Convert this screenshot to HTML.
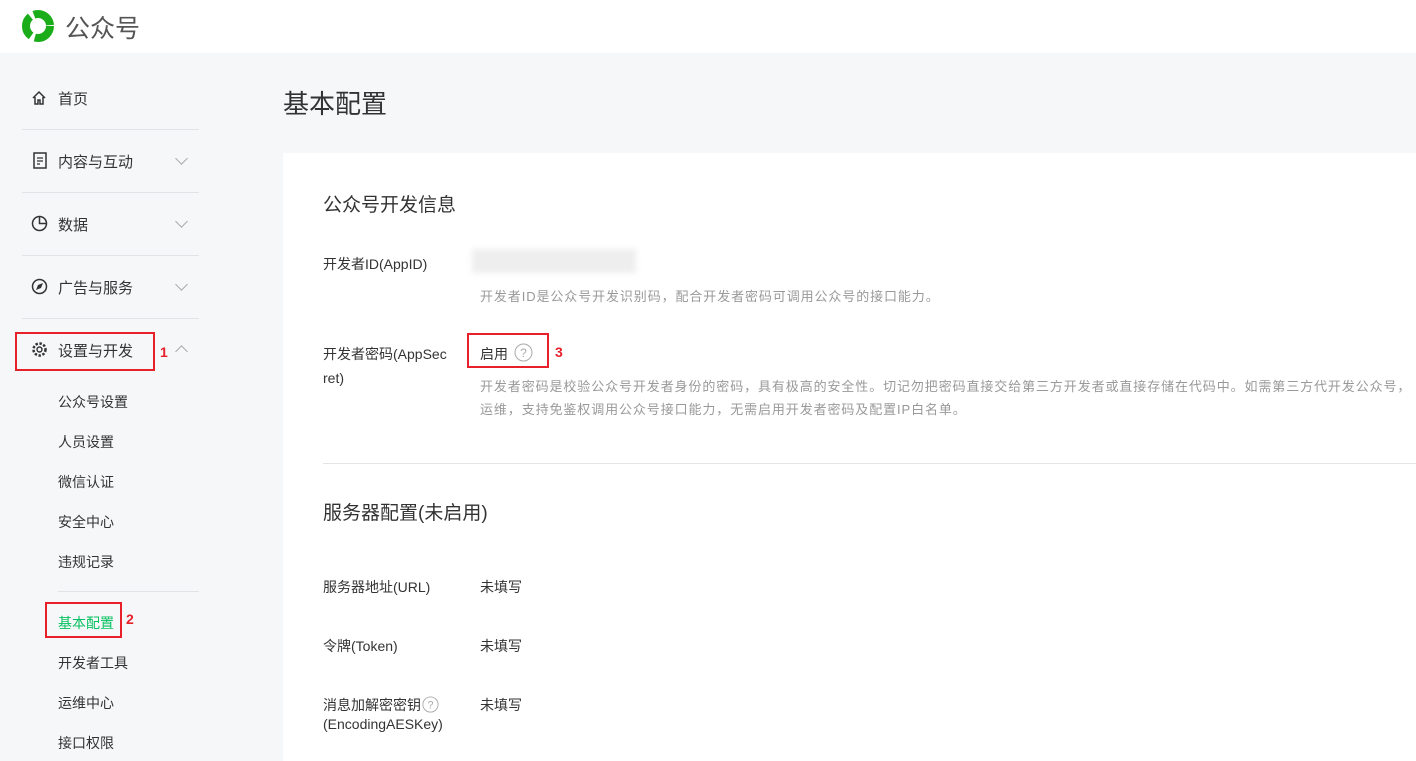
<!DOCTYPE html><html><head><meta charset="utf-8"><style>
*{margin:0;padding:0;box-sizing:border-box}
body{width:1416px;height:761px;overflow:hidden;background:#f6f7f9;font-family:"Liberation Sans","Noto Sans CJK SC",sans-serif;position:relative;color:#333}
.a{position:absolute;white-space:nowrap}
.top{position:absolute;left:0;top:0;width:1416px;height:53px;background:#fff}
.nav{font-size:15px;color:#333}
.sep{position:absolute;left:22px;width:177px;height:1px;background:#e2e3e6}
.sub{font-size:14px;color:#333}
.red{position:absolute;border:2px solid #e8202a}
.rn{color:#e8202a;font-weight:bold;font-size:14px}
.card{position:absolute;left:283px;top:153px;width:1133px;height:608px;background:#fff}
.lbl{font-size:14px;color:#333}
.tip{font-size:13px;color:#999;letter-spacing:0.9px}
.chev{position:absolute;width:9px;height:9px;border-right:1.5px solid #aaa;border-bottom:1.5px solid #aaa}
</style></head><body>
<div class="top"></div>
<svg class="a" style="left:20px;top:9px" width="36" height="34" viewBox="0 0 36 34"><circle cx="18" cy="17" r="12" fill="none" stroke="#1aad19" stroke-width="8" stroke-dasharray="22 4"/></svg>
<div class="a" style="left:65px;top:9px;font-size:25px;color:#555">公众号</div>

<svg class="a" style="left:31px;top:90px" width="16" height="16" viewBox="0 0 16 16"><path d="M2 8L8 2l6 6M4 7v7h3v-4h2v4h3V7" fill="none" stroke="#333" stroke-width="1.5"/></svg>
<div class="a nav" style="left:58px;top:88px">首页</div>
<div class="sep" style="top:129px"></div>
<svg class="a" style="left:33px;top:152px" width="14" height="17" viewBox="0 0 14 17"><rect x="1" y="1" width="12" height="15" fill="none" stroke="#333" stroke-width="1.5"/><path d="M4 6h6M4 9h6M4 12h3" stroke="#333" stroke-width="1.3"/></svg>
<div class="a nav" style="left:58px;top:151px">内容与互动</div>
<div class="chev" style="left:177px;top:154px;transform:rotate(45deg)"></div>
<div class="sep" style="top:192px"></div>
<svg class="a" style="left:31px;top:215px" width="17" height="17" viewBox="0 0 17 17"><circle cx="8.5" cy="8.5" r="7" fill="none" stroke="#333" stroke-width="1.5"/><path d="M8.5 1.5v7h7" fill="none" stroke="#333" stroke-width="1.5"/></svg>
<div class="a nav" style="left:58px;top:214px">数据</div>
<div class="chev" style="left:177px;top:217px;transform:rotate(45deg)"></div>
<div class="sep" style="top:255px"></div>
<svg class="a" style="left:31px;top:278px" width="17" height="17" viewBox="0 0 17 17"><circle cx="8.5" cy="8.5" r="7" fill="none" stroke="#333" stroke-width="1.5"/><path d="M5 12l2-5 5-2-2 5z" fill="#333"/></svg>
<div class="a nav" style="left:58px;top:277px">广告与服务</div>
<div class="chev" style="left:177px;top:280px;transform:rotate(45deg)"></div>
<div class="sep" style="top:318px"></div>
<svg class="a" style="left:31px;top:341px" width="17" height="17" viewBox="0 0 17 17"><circle cx="8.5" cy="8.5" r="6" fill="none" stroke="#333" stroke-width="2.5" stroke-dasharray="2.4 1.6"/><circle cx="8.5" cy="8.5" r="2.5" fill="none" stroke="#333" stroke-width="1.4"/></svg>
<div class="a nav" style="left:58px;top:340px">设置与开发</div>
<div class="chev" style="left:177px;top:347px;transform:rotate(-135deg)"></div>
<div class="red" style="left:15px;top:332px;width:140px;height:39px"></div>
<div class="a rn" style="left:160px;top:344px">1</div>

<div class="a sub" style="left:58px;top:392px">公众号设置</div>
<div class="a sub" style="left:58px;top:432px">人员设置</div>
<div class="a sub" style="left:58px;top:472px">微信认证</div>
<div class="a sub" style="left:58px;top:512px">安全中心</div>
<div class="a sub" style="left:58px;top:552px">违规记录</div>
<div class="sep" style="left:58px;width:141px;top:591px"></div>
<div class="a sub" style="left:58px;top:613px;color:#07c160">基本配置</div>
<div class="red" style="left:45px;top:602px;width:77px;height:36px"></div>
<div class="a rn" style="left:126px;top:611px">2</div>
<div class="a sub" style="left:58px;top:653px">开发者工具</div>
<div class="a sub" style="left:58px;top:693px">运维中心</div>
<div class="a sub" style="left:58px;top:733px">接口权限</div>

<div class="a" style="left:283px;top:84px;font-size:26px;color:#333">基本配置</div>
<div class="card"></div>
<div class="a" style="left:323px;top:190px;font-size:19px;color:#333">公众号开发信息</div>
<div class="a lbl" style="left:323px;top:254px">开发者ID(AppID)</div>
<div class="a" style="left:472px;top:249px;width:164px;height:24px;background:#eee;filter:blur(3px)"></div>
<div class="a tip" style="left:480px;top:286px">开发者ID是公众号开发识别码，配合开发者密码可调用公众号的接口能力。</div>
<div class="a lbl" style="left:323px;top:342px;line-height:24px;white-space:normal;word-break:break-all;width:127px">开发者密码(AppSecret)</div>
<div class="a lbl" style="left:480px;top:344px;color:#333">启用</div>
<svg class="a" style="left:514px;top:343px" width="19" height="19" viewBox="0 0 19 19"><circle cx="9.5" cy="9.5" r="8.5" fill="none" stroke="#aaa"/><text x="9.5" y="14" font-size="12" text-anchor="middle" fill="#aaa" font-family="Liberation Sans">?</text></svg>
<div class="red" style="left:467px;top:333px;width:82px;height:35px"></div>
<div class="a rn" style="left:555px;top:344px">3</div>
<div class="a tip" style="left:480px;top:376px">开发者密码是校验公众号开发者身份的密码，具有极高的安全性。切记勿把密码直接交给第三方开发者或直接存储在代码中。如需第三方代开发公众号，</div>
<div class="a tip" style="left:480px;top:399px">运维，支持免鉴权调用公众号接口能力，无需启用开发者密码及配置IP白名单。</div>
<div class="a" style="left:323px;top:463px;width:1093px;height:1px;background:#e5e5e5"></div>
<div class="a" style="left:323px;top:498px;font-size:19px;color:#333">服务器配置(未启用)</div>
<div class="a lbl" style="left:323px;top:577px">服务器地址(URL)</div>
<div class="a lbl" style="left:480px;top:577px">未填写</div>
<div class="a lbl" style="left:323px;top:636px">令牌(Token)</div>
<div class="a lbl" style="left:480px;top:636px">未填写</div>
<div class="a lbl" style="left:323px;top:695px">消息加解密密钥</div>
<svg class="a" style="left:422px;top:696px" width="17" height="17" viewBox="0 0 19 19"><circle cx="9.5" cy="9.5" r="8.5" fill="none" stroke="#aaa"/><text x="9.5" y="14" font-size="12" text-anchor="middle" fill="#aaa" font-family="Liberation Sans">?</text></svg>
<div class="a lbl" style="left:323px;top:716px">(EncodingAESKey)</div>
<div class="a lbl" style="left:480px;top:695px">未填写</div>
</body></html>
